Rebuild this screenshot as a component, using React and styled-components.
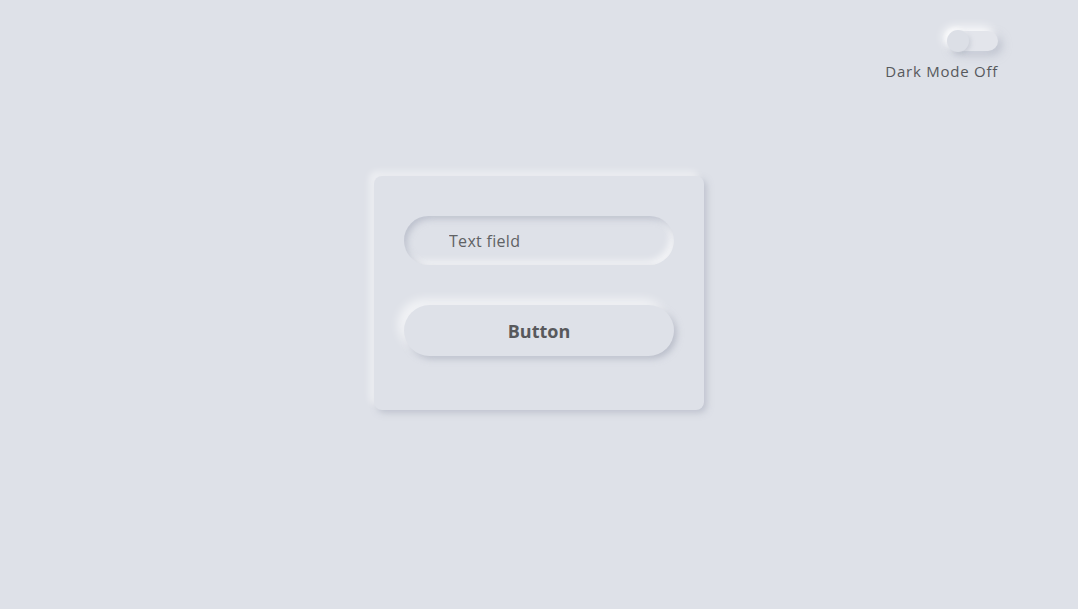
import React, { useState } from "react";
import styled, { createGlobalStyle } from "styled-components";

const GlobalStyle = createGlobalStyle`
  html, body {
    margin: 0;
    padding: 0;
    background: #dee1e8;
  }
  body {
    font-family: "Open Sans", "Liberation Sans", sans-serif;
  }
`;

const Page = styled.div`
  min-height: 100vh;
  background: #dee1e8;
  display: flex;
  flex-direction: column;
`;

const Header = styled.header`
  display: flex;
  justify-content: flex-end;
  padding: 29px 80px 0 0;
`;

const ToggleGroup = styled.div`
  display: flex;
  flex-direction: column;
  align-items: flex-end;
  gap: 10px;
`;

const Track = styled.button`
  position: relative;
  width: 51px;
  height: 20px;
  margin-top: 2px;
  padding: 0;
  border: none;
  border-radius: 10px;
  background: #e3e5eb;
  box-shadow: -4px -4px 10px rgba(255, 255, 255, 0.9),
    4px 4px 10px rgba(163, 168, 184, 0.55);
  cursor: pointer;
`;

const Knob = styled.span`
  position: absolute;
  top: -1px;
  left: ${(p) => (p.$on ? "28px" : "0")};
  width: 22px;
  height: 22px;
  border-radius: 50%;
  background: #dcdfe6;
  box-shadow: 2px 2px 4px rgba(163, 168, 184, 0.35),
    -2px -2px 4px rgba(255, 255, 255, 0.6);
  transition: left 0.2s;
`;

const ToggleLabel = styled.span`
  font-size: 15px;
  letter-spacing: 0.75px;
  color: #57595d;
`;

const Main = styled.main`
  display: flex;
  justify-content: center;
  padding-top: 95px;
`;

const Card = styled.div`
  width: 330px;
  box-sizing: border-box;
  padding: 40px 30px 54px;
  border-radius: 8px;
  background: #dee1e8;
  box-shadow: -5px -5px 6px rgba(255, 255, 255, 0.45),
    3px 3px 6px rgba(163, 168, 184, 0.5);
  display: flex;
  flex-direction: column;
  gap: 40px;
`;

const Field = styled.input`
  width: 270px;
  height: 49px;
  box-sizing: border-box;
  padding: 0 20px 0 45px;
  border: none;
  outline: none;
  border-radius: 25px;
  background: #dee1e8;
  font-family: "Open Sans", "Liberation Sans", sans-serif;
  font-size: 16px;
  letter-spacing: 0.3px;
  color: #606264;
  box-shadow: inset 3px 3px 6px rgba(163, 168, 184, 0.55),
    inset -4px -4px 7px rgba(255, 255, 255, 0.65);

  &::placeholder {
    color: #606264;
  }
`;

const Button = styled.button`
  width: 270px;
  height: 51px;
  border: none;
  border-radius: 26px;
  background: #dee1e8;
  font-family: "Open Sans", "Liberation Sans", sans-serif;
  font-size: 18px;
  font-weight: 700;
  color: #58595c;
  cursor: pointer;
  box-shadow: -6px -6px 10px rgba(255, 255, 255, 0.6),
    3px 3px 6px rgba(163, 168, 184, 0.6);
`;

export default function App() {
  const [dark, setDark] = useState(false);

  return (
    <Page>
      <GlobalStyle />
      <Header>
        <ToggleGroup>
          <Track onClick={() => setDark(!dark)} aria-label="Dark mode">
            <Knob $on={dark} />
          </Track>
          <ToggleLabel>Dark Mode {dark ? "On" : "Off"}</ToggleLabel>
        </ToggleGroup>
      </Header>
      <Main>
        <Card>
          <Field placeholder="Text field" />
          <Button>Button</Button>
        </Card>
      </Main>
    </Page>
  );
}
